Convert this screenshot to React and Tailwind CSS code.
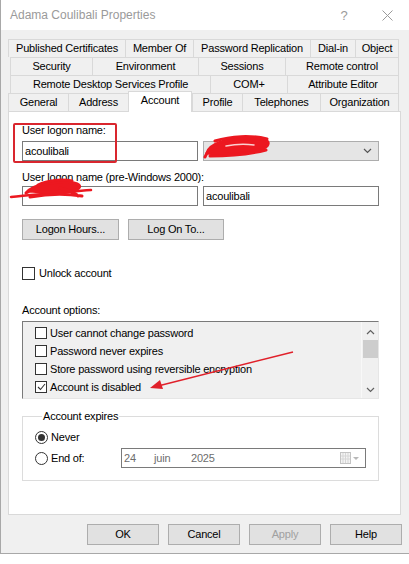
import React from 'react';

const tabRows = [
    {
        shift: 'ml-0',
        tabs: [
            { label: 'Published Certificates', w: 'w-[117px]' },
            { label: 'Member Of', w: 'w-[68px]' },
            { label: 'Password Replication', w: 'w-[117px]' },
            { label: 'Dial-in', w: 'w-[45px]' },
            { label: 'Object', w: 'w-[44px]' },
        ],
    },
    {
        shift: 'ml-[2px]',
        tabs: [
            { label: 'Security', w: 'w-[82px]' },
            { label: 'Environment', w: 'w-[106px]' },
            { label: 'Sessions', w: 'w-[87px]' },
            { label: 'Remote control', w: 'w-[114px]' },
        ],
    },
    {
        shift: 'ml-[2px]',
        tabs: [
            { label: 'Remote Desktop Services Profile', w: 'w-[200px]' },
            { label: 'COM+', w: 'w-[77px]' },
            { label: 'Attribute Editor', w: 'w-[112px]' },
        ],
    },
    {
        shift: 'ml-0',
        tabs: [
            { label: 'General', w: 'w-[60px]' },
            { label: 'Address', w: 'w-[60px]' },
            { label: 'Account', w: 'w-[64px]', active: true },
            { label: 'Profile', w: 'w-[50px]' },
            { label: 'Telephones', w: 'w-[78px]' },
            { label: 'Organization', w: 'w-[79px]' },
        ],
    },
];

const accountOptions = [
    { label: 'User cannot change password', checked: false },
    { label: 'Password never expires', checked: false },
    { label: 'Store password using reversible encryption', checked: false },
    { label: 'Account is disabled', checked: true },
];

const Chevron = ({ up, className }) => (
    <svg className={className} width="9" height="6" viewBox="0 0 9 6" fill="none" stroke="currentColor" strokeWidth="1.2">
        <path d={up ? 'M1 5l3.5-3.5L8 5' : 'M1 1l3.5 3.5L8 1'} />
    </svg>
);

const CheckBox = ({ checked, size = 'w-[13px] h-[13px]' }) => (
    <div className={`${size} shrink-0 border border-[#333] bg-white flex items-center justify-center`}>
        {checked && (
            <svg width="9" height="8" viewBox="0 0 9 8" fill="none" stroke="#333" strokeWidth="1.1">
                <path d="M1 4l2.5 2.5L8 1" />
            </svg>
        )}
    </div>
);

const Radio = ({ checked }) => (
    <div className="w-[13px] h-[13px] shrink-0 rounded-full border border-[#333] bg-white flex items-center justify-center">
        {checked && <div className="w-[7px] h-[7px] rounded-full bg-[#333]" />}
    </div>
);

const Button = ({ children, w, disabled }) => (
    <div className={`${w} h-[21px] border border-[#adadad] bg-[#e1e1e1] flex items-center justify-center ${disabled ? 'text-[#a0a0a0]' : 'text-black'}`}>
        {children}
    </div>
);

const App = () => {
    return (
        <div className="relative w-[409px] h-[564px] overflow-hidden bg-white text-[11px] leading-[15px] tracking-[-0.2px] text-black font-['Liberation_Sans',Arial,sans-serif]">
            <div className="h-[554px] border-l border-b border-[#a8a8a8] bg-[#f0f0f0] flex flex-col">
                {/* title bar */}
                <div className="h-[30px] shrink-0 bg-white flex items-center pl-[9px] text-[12px] tracking-normal text-[#9a9a9a]">
                    <span>Adama Coulibali Properties</span>
                    <span className="ml-[185px] text-[13px] font-light">?</span>
                    <svg className="ml-[34px]" width="11" height="11" viewBox="0 0 11 11" stroke="#9a9a9a" strokeWidth="1">
                        <path d="M0.5 0.5l10 10M10.5 0.5l-10 10" />
                    </svg>
                </div>

                {/* tab strip */}
                <div className="pl-[7px] pt-[9px]">
                    {tabRows.map((row, r) => (
                        <div key={r} className={`flex h-[18px] items-end ${row.shift}`}>
                            {row.tabs.map((t, i) => (
                                <div
                                    key={t.label}
                                    className={`${t.w} flex items-center justify-center border-t border-l border-[#d9d9d9] ${i === row.tabs.length - 1 ? 'border-r' : ''} ${t.active ? 'relative z-10 h-[21px] mb-[-1px] bg-white border-r pb-[3px]' : 'h-full bg-[#f0f0f0]'}`}
                                >
                                    {t.label}
                                </div>
                            ))}
                        </div>
                    ))}
                </div>

                {/* account page */}
                <div className="ml-[7px] w-[393px] h-[404px] shrink-0 border border-[#d9d9d9] bg-white pl-[13px] pt-[11px]">
                    <div>User logon name:</div>
                    <div className="mt-[3px] flex gap-[5px]">
                        <div className="w-[176px] h-[20px] border border-[#7a7a7a] bg-white pl-[2px] flex items-center">acoulibali</div>
                        <div className="w-[176px] h-[20px] border border-[#adadad] bg-[#e5e5e5] flex items-center justify-end pr-[6px] text-[#555]">
                            <Chevron />
                        </div>
                    </div>

                    <div className="mt-[9px]">User logon name (pre-Windows 2000):</div>
                    <div className="mt-[1px] flex gap-[5px]">
                        <div className="w-[176px] h-[20px] border border-[#7a7a7a] bg-white" />
                        <div className="w-[176px] h-[20px] border border-[#7a7a7a] bg-white pl-[2px] flex items-center">acoulibali</div>
                    </div>

                    <div className="mt-[13px] flex gap-[9px]">
                        <Button w="w-[97px]">Logon Hours...</Button>
                        <Button w="w-[96px]">Log On To...</Button>
                    </div>

                    <div className="mt-[25px] h-[16px] flex items-center gap-[4px]">
                        <CheckBox />
                        <span>Unlock account</span>
                    </div>

                    <div className="mt-[22px]">Account options:</div>
                    <div className="mt-[3px] w-[357px] h-[78px] flex border-t border-l border-[#7a7a7a] border-r border-b border-r-[#e6e6e6] border-b-[#e6e6e6] bg-[#f0f0f0]">
                        <div className="flex-1 pl-[12px] pt-[2px]">
                            {accountOptions.map((o) => (
                                <div key={o.label} className="h-[18px] flex items-center gap-[3px]">
                                    <CheckBox checked={o.checked} size="w-[12px] h-[12px]" />
                                    <span>{o.label}</span>
                                </div>
                            ))}
                        </div>
                        <div className="w-[17px] flex flex-col items-center bg-[#f0f0f0] border-l border-[#f8f8f8] text-[#606060]">
                            <Chevron up className="mt-[7px]" />
                            <div className="mt-[5px] w-[15px] h-[18px] bg-[#cdcdcd]" />
                            <Chevron className="mt-auto mb-[5px]" />
                        </div>
                    </div>

                    <fieldset className="mt-[10px] w-[357px] h-[72px] border border-[#dcdcdc] pl-[12px]">
                        <legend className="ml-[7px] px-[1px]">Account expires</legend>
                        <div className="mt-[5px] h-[16px] flex items-center gap-[3px]">
                            <Radio checked />
                            <span>Never</span>
                        </div>
                        <div className="mt-[3px] h-[20px] flex items-center">
                            <div className="w-[86px] flex items-center gap-[3px]">
                                <Radio />
                                <span>End of:</span>
                            </div>
                            <div className="w-[245px] h-[20px] border border-[#7a7a7a] bg-white flex items-center pl-[2px] pr-[5px] text-[#6d6d6d]">
                                <span className="w-[30px]">24</span>
                                <span className="w-[37px]">juin</span>
                                <span>2025</span>
                                <svg className="ml-auto" width="20" height="12" viewBox="0 0 20 12" fill="none">
                                    <rect x="0.5" y="0.5" width="10" height="11" fill="#f4f4f4" stroke="#c4c4c4" />
                                    <path d="M3 1v10M5.5 1v10M8 1v10M1 4h9M1 7h9" stroke="#d6d6d6" />
                                    <path d="M13 5h6l-3 3z" fill="#b8b8b8" />
                                </svg>
                            </div>
                        </div>
                    </fieldset>
                </div>

                {/* dialog buttons */}
                <div className="mt-[9px] pl-[86px] flex gap-[9px]">
                    <Button w="w-[72px]">OK</Button>
                    <Button w="w-[72px]">Cancel</Button>
                    <Button w="w-[72px]" disabled>Apply</Button>
                    <Button w="w-[72px]">Help</Button>
                </div>
            </div>

            {/* red pen marks drawn over the dialog */}
            <svg className="absolute inset-0 pointer-events-none" width="409" height="564" viewBox="0 0 409 564" fill="none">
                <rect x="14" y="124" width="102" height="38" rx="1" stroke="#d9262e" strokeWidth="2" />
                <g stroke="#ec1820" strokeLinecap="round" strokeLinejoin="round">
                    <path d="M207 153c2-9 20-15 42-15 16 0 22 3 18 8-6 6-30 9-52 8z" fill="#ec1820" strokeWidth="3" />
                    <path d="M205 157c2-6 6-9 12-10M215 141c16-5 36-6 52-2M210 156c20 0 40-2 56-6" strokeWidth="3" />
                    <path d="M226 146c10-2 20-2 28-1" stroke="#fbd0d0" strokeWidth="1.5" />
                    <path d="M11 197c24-2 52-5 80-7" strokeWidth="2.5" />
                    <path d="M26 193c8-9 30-13 48-10 10 2 6 8-8 9-14 1-28 0-36-1z" fill="#ec1820" strokeWidth="3" />
                    <path d="M38 185c10-5 24-6 34-4M30 197c16-3 34-4 52-1M60 188c8 2 14 4 18 8" strokeWidth="3" />
                </g>
                <path d="M293 352L158 386" stroke="#e0202a" strokeWidth="1.5" />
                <path d="M150 388l10-8 3 9z" fill="#e0202a" />
            </svg>
        </div>
    );
};

export default App;
